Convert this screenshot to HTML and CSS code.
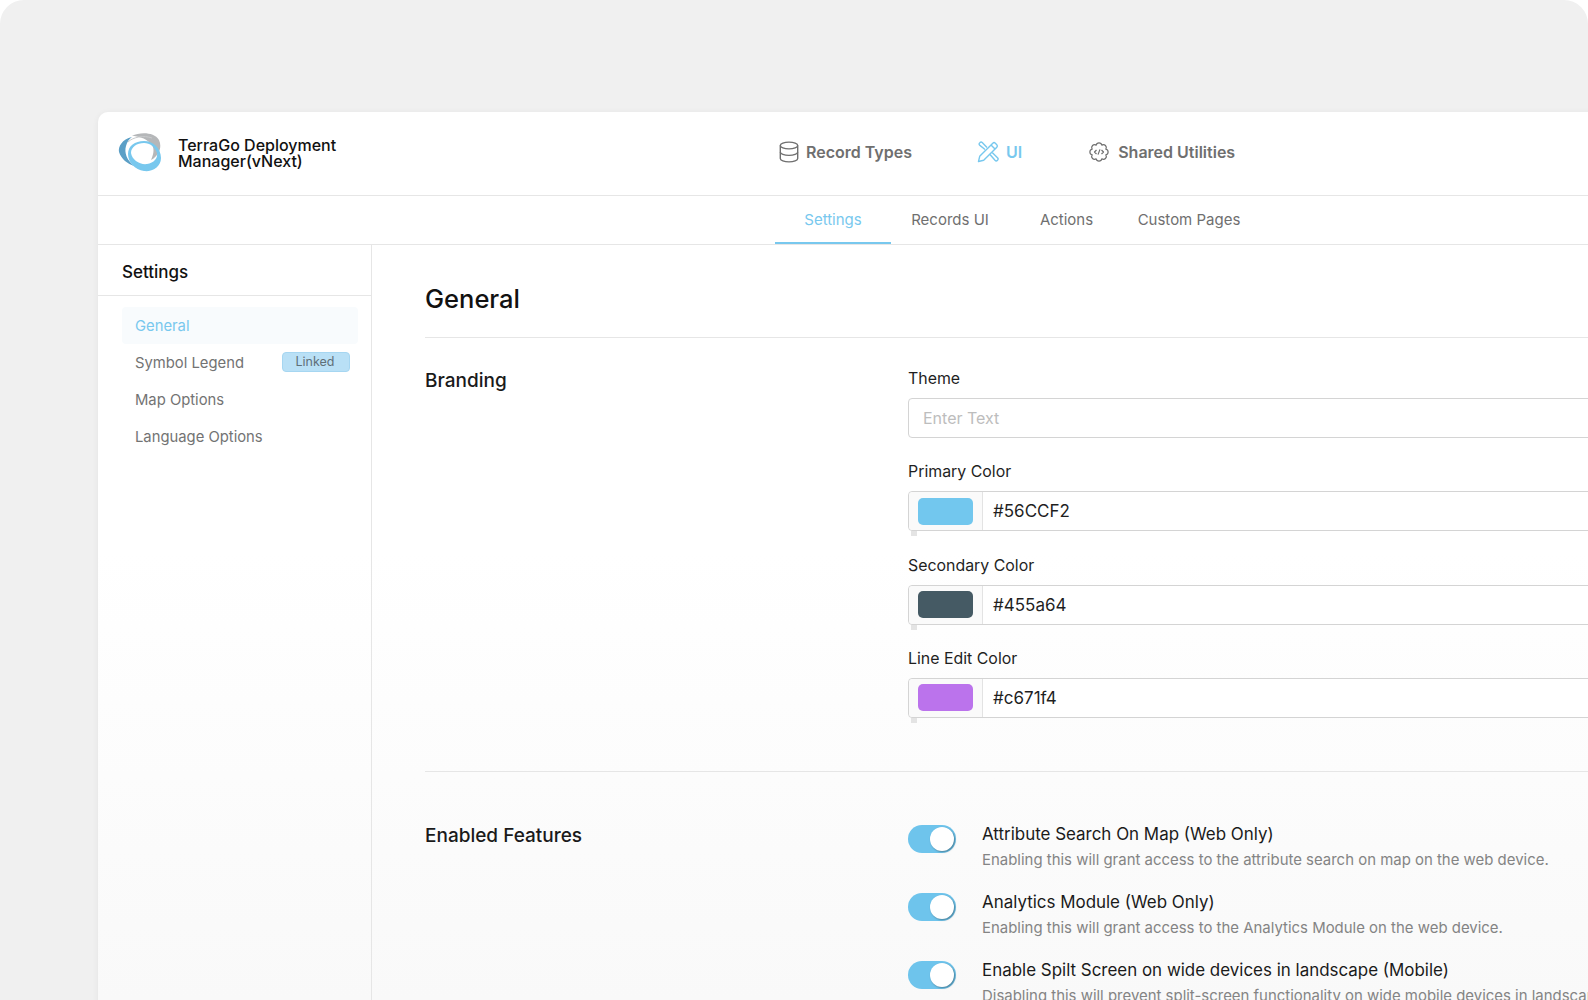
FILE: index.html
```html
<!DOCTYPE html>
<html lang="en">
<head>
    <meta charset="UTF-8">
    <meta name="viewport" content="width=device-width, initial-scale=1.0">
    <title>TerraGo Deployment Manager</title>
    <link rel="stylesheet" href="styles.css">
</head>
<body>
    <div class="screen">
        <div class="card">
            <header class="topbar">
                <div class="brand">
                    <svg class="logo" viewBox="0 0 44 39">
                        <path fill="#b5b7b9" d="M14 3C22-1 36-1 41 7c3 6 1 15-8 20 3-7 4-13-1-17C27 5 20 3 14 3z"/>
                        <path fill="none" stroke="#c9cbcd" stroke-width="1" d="M10 9c5-5 16-7 24-4"/>
                        <path fill="#5b9fc6" d="M14 4C4 6 0 14 1 19c2 7 9 12 15 14-7-6-10-13-8-20 1-4 3-7 6-9z"/>
                        <path fill="#78c8ee" fill-rule="evenodd" d="M26 8c9 0 17 7 17 17 0 9-9 14-17 13-9-1-16-9-16-17 0-8 7-13 16-13zM26 10c-7 0-13 4-13 10 1 7 9 12 16 11 7-1 11-6 10-11-2-6-7-10-13-10z"/>
                    </svg>
                    <div class="brand-name">TerraGo Deployment<br>Manager(vNext)</div>
                </div>
                <nav class="main-nav">
                    <a class="nav-item nav-records">
                        <svg viewBox="0 0 20 22" fill="none" stroke="currentColor" stroke-width="1.4">
                            <ellipse cx="10" cy="4.5" rx="8.700" ry="3.400"/>
                            <path d="M1.300 4.500v13c0 1.900 3.900 3.400 8.700 3.400s8.700-1.500 8.700-3.400v-13"/>
                            <path d="M1.300 11c0 1.900 3.900 3.400 8.700 3.400s8.700-1.500 8.700-3.400"/>
                        </svg>
                        Record Types
                    </a>
                    <a class="nav-item nav-ui">
                        <svg viewBox="0 0 22 22" fill="none" stroke="currentColor" stroke-width="1.4" stroke-linejoin="round">
                            <path d="M1.500 20.500l1.200-5.200L15.800 2.200a1.800 1.800 0 0 1 2.500 0l1.500 1.500a1.800 1.800 0 0 1 0 2.500L6.700 19.300z"/>
                            <path d="M14 4l4 4"/>
                            <path d="M8 8.500L2.600 4.100a1.500 1.500 0 0 1 0-2.200l.4-.4a1.500 1.500 0 0 1 2.200 0L10 6.500"/>
                            <path d="M13 13.500l5 5.800a1.500 1.500 0 0 0 2.500-2.500L15.200 11.500"/>
                        </svg>
                        UI
                    </a>
                    <a class="nav-item nav-shared">
                        <svg viewBox="0 0 22 22" fill="none" stroke="currentColor" stroke-width="1.2" stroke-linejoin="round">
                            <path d="M17.840 8.170A2.900 2.900 0 0 1 17.840 13.830A2.900 2.900 0 0 1 13.830 17.840A2.900 2.900 0 0 1 8.170 17.840A2.900 2.900 0 0 1 4.160 13.830A2.900 2.900 0 0 1 4.160 8.170A2.900 2.900 0 0 1 8.170 4.160A2.900 2.900 0 0 1 13.830 4.160A2.900 2.900 0 0 1 17.840 8.170z"/>
                            <path d="M8.500 9l-2 2 2 2M13.500 9l2 2-2 2M12 8.400l-2 5.200"/>
                        </svg>
                        Shared Utilities
                    </a>
                </nav>
            </header>

            <div class="tabs">
                <a class="tab tab-settings active">Settings</a>
                <a class="tab tab-records">Records UI</a>
                <a class="tab tab-actions">Actions</a>
                <a class="tab tab-custom">Custom Pages</a>
            </div>

            <div class="content">
                <aside class="sidebar">
                    <h2 class="sidebar-title">Settings</h2>
                    <ul class="side-list">
                        <li class="side-item active">General</li>
                        <li class="side-item">Symbol Legend <span class="badge">Linked</span></li>
                        <li class="side-item">Map Options</li>
                        <li class="side-item">Language Options</li>
                    </ul>
                </aside>

                <main class="main">
                    <h1 class="page-title">General</h1>

                    <section class="section section-branding">
                        <h3 class="section-title">Branding</h3>
                        <div class="fields">
                            <div class="field">
                                <label class="field-label">Theme</label>
                                <div class="text-input">Enter Text</div>
                            </div>
                            <div class="field">
                                <label class="field-label">Primary Color</label>
                                <div class="color-input">
                                    <span class="swatch-cell"><span class="swatch swatch-primary"></span></span>
                                    <span class="color-value">#56CCF2</span>
                                </div>
                            </div>
                            <div class="field">
                                <label class="field-label">Secondary Color</label>
                                <div class="color-input">
                                    <span class="swatch-cell"><span class="swatch swatch-secondary"></span></span>
                                    <span class="color-value">#455a64</span>
                                </div>
                            </div>
                            <div class="field">
                                <label class="field-label">Line Edit Color</label>
                                <div class="color-input">
                                    <span class="swatch-cell"><span class="swatch swatch-line"></span></span>
                                    <span class="color-value">#c671f4</span>
                                </div>
                            </div>
                        </div>
                    </section>

                    <section class="section section-features">
                        <h3 class="section-title">Enabled Features</h3>
                        <div class="features">
                            <div class="feature">
                                <span class="toggle"></span>
                                <div>
                                    <div class="feature-name">Attribute Search On Map (Web Only)</div>
                                    <div class="feature-desc">Enabling this will grant access to the attribute search on map on the web device.</div>
                                </div>
                            </div>
                            <div class="feature">
                                <span class="toggle"></span>
                                <div>
                                    <div class="feature-name">Analytics Module (Web Only)</div>
                                    <div class="feature-desc">Enabling this will grant access to the Analytics Module on the web device.</div>
                                </div>
                            </div>
                            <div class="feature">
                                <span class="toggle"></span>
                                <div>
                                    <div class="feature-name">Enable Spilt Screen on wide devices in landscape (Mobile)</div>
                                    <div class="feature-desc">Disabling this will prevent split-screen functionality on wide mobile devices in landscape orientation.</div>
                                </div>
                            </div>
                        </div>
                    </section>
                </main>
            </div>
        </div>
    </div>
</body>
</html>
```

FILE: styles.css
```css
* {
    margin: 0;
    padding: 0;
    box-sizing: border-box;
    font-family: Inter, "Liberation Sans", sans-serif;
}

html, body {
    height: 1000px;
    overflow: hidden;
    background: #fff;
}

.screen {
    height: 1000px;
    padding: 112px 0 0 98px;
    background: #f0f0f0;
    border-radius: 24px 24px 0 0;
    overflow: hidden;
}

/* the shot fades a little towards the bottom */
.card {
    width: 1600px;
    height: 1100px;
    background: linear-gradient(#fff 440px, #f9f9f9 888px);
    border-radius: 10px 0 0 0;
    box-shadow: 0 1px 6px rgba(0, 0, 0, 0.06);
}

.topbar {
    display: flex;
    align-items: center;
    height: 84px;
    padding-bottom: 4px;
    border-bottom: 1px solid #e6e6e6;
}

.brand {
    display: flex;
    align-items: center;
    width: 680px;
    margin-top: 2px;
    padding-left: 20px;
}

.logo {
    width: 44px;
    height: 39px;
    margin-right: 16px;
}

.brand-name {
    font-size: 16px;
    font-weight: 500;
    line-height: 16px;
    color: #111;
}

.main-nav {
    display: flex;
    align-items: center;
}

.nav-item {
    display: flex;
    align-items: center;
    gap: 7px;
    font-size: 16px;
    font-weight: 600;
    color: #6f6f6f;
}

.nav-item svg {
    width: 20px;
    height: 22px;
}

.nav-records {
    margin-left: 1px;
}

.nav-ui {
    margin-left: 65px;
    color: #78c8ee;
}

.nav-ui svg {
    width: 22px;
}

.nav-shared {
    margin-left: 66px;
    gap: 8px;
}

.nav-shared svg {
    width: 22px;
}

.tabs {
    display: flex;
    height: 49px;
    padding-left: 677px;
    border-bottom: 1px solid #e6e6e6;
}

.tab {
    display: flex;
    align-items: center;
    justify-content: center;
    height: 48px;
    font-size: 15px;
    color: #6f6f6f;
    border-bottom: 2px solid transparent;
}

.tab-settings { width: 116px; }
.tab-records { width: 117px; padding-left: 1px; }
.tab-actions { width: 117px; }
.tab-custom { width: 120px; margin-left: 4px; }

.tab.active {
    color: #78c8ee;
    border-bottom-color: #78c8ee;
}

.content {
    display: flex;
    height: 900px;
}

.sidebar {
    flex: none;
    width: 274px;
    border-right: 1px solid #e6e6e6;
}

.sidebar-title {
    height: 51px;
    padding: 16px 0 0 24px;
    font-size: 17px;
    font-weight: 500;
    line-height: 22px;
    color: #111;
    border-bottom: 1px solid #e6e6e6;
}

.side-list {
    list-style: none;
    padding: 11px 13px 0 24px;
}

.side-item {
    display: flex;
    align-items: center;
    justify-content: space-between;
    height: 37px;
    padding: 0 8px 0 13px;
    font-size: 14.8px;
    color: #737373;
    border-radius: 4px;
}

.side-item.active {
    color: #78c8ee;
    background: #f8fbfd;
}

.badge {
    width: 68px;
    height: 20px;
    margin-bottom: 2px;
    padding-right: 2px;
    font-size: 12.5px;
    line-height: 18px;
    text-align: center;
    color: #5f6f78;
    background: #b9e0f6;
    border: 1px solid #a6d6f1;
    border-radius: 4px;
}

.main {
    flex: none;
    width: 1326px;
    padding-left: 53px;
}

.page-title {
    height: 93px;
    padding-top: 36px;
    font-size: 25.5px;
    font-weight: 500;
    line-height: 36px;
    color: #111;
    border-bottom: 1px solid #e6e6e6;
}

.section {
    display: flex;
}

.section-title {
    flex: none;
    width: 483px;
    font-size: 19px;
    font-weight: 500;
    line-height: 26px;
    color: #1a1a1a;
}

.section-branding {
    height: 434px;
    padding-top: 30px;
    border-bottom: 1px solid #e6e6e6;
}

.section-features {
    padding-top: 51px;
}

.fields {
    width: 800px;
    margin-top: 1px;
}

.field {
    margin-bottom: 24.3px;
}

.field-label {
    display: block;
    margin-bottom: 9px;
    font-size: 15.9px;
    line-height: 20px;
    color: #1f1f1f;
}

.text-input,
.color-input {
    height: 40px;
    border: 1px solid #d4d4d4;
    border-radius: 4px 0 0 4px;
    background: #fff;
}

.text-input {
    padding-left: 14px;
    font-size: 16px;
    line-height: 38px;
    color: #bdbdbd;
}

.color-input {
    position: relative;
    display: flex;
    align-items: center;
}

/* small marker left under each colour field */
.color-input::after {
    content: "";
    position: absolute;
    left: 2px;
    top: 39px;
    width: 6px;
    height: 5px;
    background: #e4e4e4;
}

.swatch-cell {
    display: flex;
    align-items: center;
    width: 74px;
    height: 38px;
    padding-left: 9px;
    background: #fafafa;
    border-right: 1px solid #e3e3e3;
    border-radius: 4px 0 0 4px;
}

.swatch {
    width: 55px;
    height: 27px;
    border-radius: 5px;
}

.swatch-primary { background: #72c7ee; }
.swatch-secondary { background: #455a64; }
.swatch-line { background: #bb73ec; }

.color-value {
    padding-left: 10px;
    font-size: 17px;
    color: #1f1f1f;
}

.features {
    display: flex;
    flex-direction: column;
    gap: 20px;
}

.feature {
    display: flex;
    gap: 26px;
}

.toggle {
    position: relative;
    flex: none;
    width: 48px;
    height: 28px;
    margin-top: 2px;
    background: #6ec4ec;
    border-radius: 14px;
}

.toggle::after {
    content: "";
    position: absolute;
    top: 2px;
    right: 2px;
    width: 24px;
    height: 24px;
    background: #fff;
    border-radius: 50%;
    box-shadow: 1px 1px 2px rgba(0, 0, 0, 0.35);
}

.feature-name {
    font-size: 16.95px;
    line-height: 22px;
    color: #1a1a1a;
    white-space: nowrap;
}

.feature-desc {
    margin-top: 4px;
    font-size: 14.95px;
    line-height: 22px;
    color: #848484;
    white-space: nowrap;
}
```
